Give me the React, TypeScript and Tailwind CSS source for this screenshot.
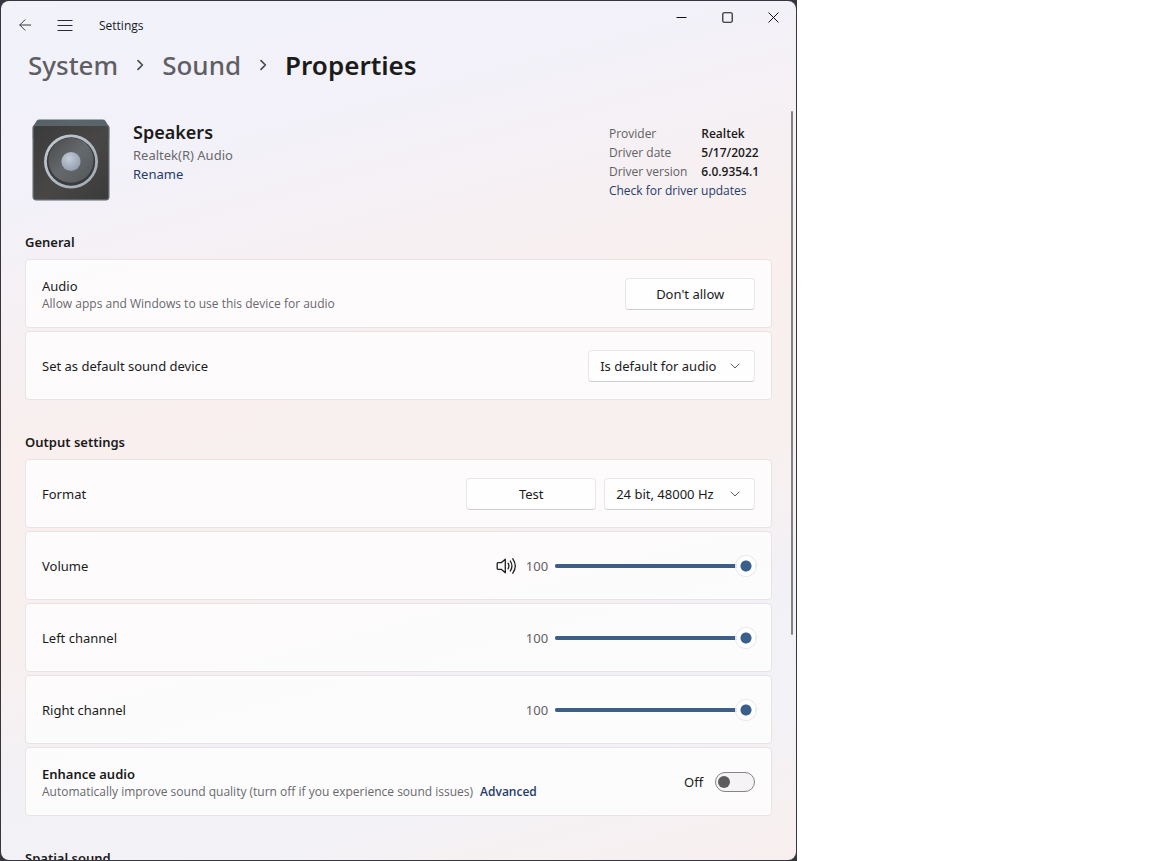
import { useState, type ReactNode } from "react";

function Chevron({ className }: { className: string }) {
  return (
    <svg viewBox="0 0 10 10" className={className} fill="none" stroke="currentColor" aria-hidden="true">
      <path d="M1 3 L5 7 L9 3" strokeLinecap="round" strokeLinejoin="round" />
    </svg>
  );
}

function CrumbArrow() {
  return (
    <svg viewBox="0 0 10 12" className="h-3 w-[10px] text-[#4c4c50]" fill="none" stroke="currentColor" strokeWidth="1.7" aria-hidden="true">
      <path d="M3 1.6 L7.4 6 L3 10.4" strokeLinecap="round" strokeLinejoin="round" />
    </svg>
  );
}

function SpeakerPicture() {
  return (
    <svg viewBox="0 0 78 82" className="h-[82px] w-[78px] shrink-0" role="img" aria-label="Speakers">
      <defs>
        <linearGradient id="face" x1="0" y1="0" x2="1" y2="1">
          <stop offset="0" stopColor="#3b3b3b" />
          <stop offset="0.55" stopColor="#484746" />
          <stop offset="1" stopColor="#3a3a3a" />
        </linearGradient>
        <linearGradient id="lid" x1="0" y1="0" x2="1" y2="0">
          <stop offset="0" stopColor="#546067" />
          <stop offset="0.5" stopColor="#59666b" />
          <stop offset="1" stopColor="#57646d" />
        </linearGradient>
        <linearGradient id="ring" x1="0" y1="0" x2="1" y2="1">
          <stop offset="0" stopColor="#c3cbd4" />
          <stop offset="1" stopColor="#a0a9b2" />
        </linearGradient>
        <linearGradient id="cone" x1="0" y1="0" x2="1" y2="1">
          <stop offset="0" stopColor="#48494a" />
          <stop offset="0.5" stopColor="#66696c" />
          <stop offset="1" stopColor="#54575a" />
        </linearGradient>
        <radialGradient id="cap" cx="0.4" cy="0.35" r="0.7">
          <stop offset="0" stopColor="#c5ced9" />
          <stop offset="1" stopColor="#8f9cab" />
        </radialGradient>
      </defs>
      <path d="M0.8 8 L4.5 2 Q5.5 0.6 7.5 0.6 H70.5 Q72.5 0.6 73.5 2 L77.2 8 V20 H0.8 Z" fill="url(#lid)" />
      <rect x="1.2" y="6.2" width="75.6" height="74.6" rx="3" fill="url(#face)" stroke="#5c6468" strokeWidth="1.4" />
      <circle cx="39" cy="42.5" r="27" fill="url(#ring)" />
      <circle cx="39" cy="42.5" r="24.2" fill="#393b3d" />
      <circle cx="39" cy="41.3" r="22.5" fill="url(#cone)" />
      <circle cx="39" cy="42.5" r="9.6" fill="url(#cap)" />
    </svg>
  );
}

function VolumeIcon() {
  return (
    <svg viewBox="0 0 22 18" className="h-[18px] w-[22px] text-[#1f1f1f]" fill="none" stroke="currentColor" strokeWidth="1.3" strokeLinecap="round" strokeLinejoin="round" aria-hidden="true">
      <path d="M9.3 2.2 L5.2 5.7 H2 Q1.2 5.7 1.2 6.5 V11.5 Q1.2 12.3 2 12.3 H5.2 L9.3 15.8 Z" />
      <path d="M12 6.2 Q13.8 9 12 11.8" />
      <path d="M14.3 4 Q17.6 9 14.3 14" />
      <path d="M16.8 1.8 Q21.8 9 16.8 16.2" />
    </svg>
  );
}

function Card({ children }: { children: ReactNode }) {
  return (
    <div className="flex min-h-[69px] items-center justify-between rounded border border-[#e9e3e5] bg-white/75 px-4">
      {children}
    </div>
  );
}

function Section({ title, children }: { title: string; children: ReactNode }) {
  return (
    <section>
      <h2 className="mb-[7px] text-[13px] leading-5 font-semibold">{title}</h2>
      <div className="flex flex-col gap-[3px]">{children}</div>
    </section>
  );
}

const buttonClass =
  "h-8 w-[130px] rounded border border-[#e8e6e8] border-b-[#cfcdcf] bg-[#fefefe] text-[13px] leading-5";

function Dropdown({ id, option, className }: { id: string; option: string; className: string }) {
  return (
    <div className={`relative ${className}`}>
      <select
        id={id}
        className="h-8 w-full appearance-none rounded border border-[#e8e6e8] border-b-[#cfcdcf] bg-[#fefefe] pr-8 pl-[11px] text-[13px] leading-5"
      >
        <option>{option}</option>
      </select>
      <Chevron className="pointer-events-none absolute top-[11px] right-[15px] h-[10px] w-[10px] text-[#5c5c5c]" />
    </div>
  );
}

function Slider({ label, icon }: { label: string; icon?: ReactNode }) {
  const [value, setValue] = useState(100);
  const id = label.toLowerCase().replace(" ", "-");
  return (
    <Card>
      <label htmlFor={id} className="text-[13px] leading-5">{label}</label>
      <div className="-mr-px flex items-center">
        {icon}
        <span className="mr-[7px] ml-2 text-[13px] leading-5 text-[#616163]">{value}</span>
        <span className="relative flex h-5 w-[201px] items-center">
          <span className="absolute inset-x-0 h-1 rounded-full bg-[#8b8a8c]" />
          <span className="absolute left-0 h-1 rounded-full bg-[#3b5f8b]" style={{ width: `${value}%` }} />
          <input
            id={id}
            type="range"
            min={0}
            max={100}
            value={value}
            onChange={(e) => setValue(Number(e.target.value))}
            className="relative m-0 h-5 w-full appearance-none bg-transparent [&::-webkit-slider-thumb]:h-5 [&::-webkit-slider-thumb]:w-5 [&::-webkit-slider-thumb]:appearance-none [&::-webkit-slider-thumb]:rounded-full [&::-webkit-slider-thumb]:bg-[radial-gradient(circle,#3b5f8b_5px,#ffffff_6px)] [&::-webkit-slider-thumb]:shadow-[0_0_0_1px_#e9e7ea]"
          />
        </span>
      </div>
    </Card>
  );
}

const smallText = "font-['Open_Sans','Noto_Sans',sans-serif] text-[12px]";

const driver = [
  ["Provider", "Realtek"],
  ["Driver date", "5/17/2022"],
  ["Driver version", "6.0.9354.1"],
];

export default function App() {
  const [enhance, setEnhance] = useState(false);
  return (
    <div className="min-h-screen bg-white font-['Noto_Sans','Open_Sans',sans-serif] text-[#1b1b1b]">
      <div className="h-screen w-[69.2%] bg-[#37353d] p-px">
        <div className="flex h-full flex-col overflow-hidden rounded-lg bg-[linear-gradient(165deg,#f1f2fb_0%,#f3f1f8_20%,#f8efee_42%,#f8f0ef_60%,#f2f1f6_75%,#f3f2f6_86%,#f8efee_100%)]">
          <header className="flex h-[42px] shrink-0 items-start justify-between">
            <div className="flex items-center pt-[13px] pl-[18px]">
              <button aria-label="Back" className="text-[#3c3c40]">
                <svg viewBox="0 0 12 12" className="h-3 w-3" fill="none" stroke="currentColor" strokeLinecap="round" strokeLinejoin="round">
                  <path d="M6 0.8 L0.8 6 L6 11.2 M0.8 6 H11.6" />
                </svg>
              </button>
              <button aria-label="Navigation" className="ml-[26px] text-[#2c2c30]">
                <svg viewBox="0 0 16 11" className="h-[11px] w-4" fill="none" stroke="currentColor">
                  <path d="M0.5 0.5 H15.5 M0.5 5.5 H15.5 M0.5 10.5 H15.5" />
                </svg>
              </button>
              <h1 className={`ml-[26px] pt-[2px] leading-5 ${smallText}`}>Settings</h1>
            </div>
            <div className="flex h-8">
              <button aria-label="Minimize" className="flex w-[46px] items-center justify-center">
                <svg viewBox="0 0 11 11" className="size-[11px]" fill="none" stroke="#111111">
                  <path d="M0.5 5.5 H10.5" />
                </svg>
              </button>
              <button aria-label="Maximize" className="flex w-[46px] items-center justify-center">
                <svg viewBox="0 0 11 11" className="size-[11px]" fill="none" stroke="#111111" strokeWidth="1.1">
                  <rect x="0.8" y="0.8" width="9.4" height="9.4" rx="1.2" />
                </svg>
              </button>
              <button aria-label="Close" className="flex w-[46px] items-center justify-center">
                <svg viewBox="0 0 11 11" className="size-[11px]" fill="none" stroke="#111111">
                  <path d="M0.5 0.5 L10.5 10.5 M10.5 0.5 L0.5 10.5" />
                </svg>
              </button>
            </div>
          </header>

          <nav aria-label="Breadcrumb" className="flex h-11 shrink-0 items-center gap-[17px] pl-[27px] text-[26px] leading-9 font-semibold">
            <a href="#system" className="font-medium text-[#5f5f63]">System</a>
            <CrumbArrow />
            <a href="#sound" className="font-medium text-[#5f5f63]">Sound</a>
            <CrumbArrow />
            <span aria-current="page">Properties</span>
          </nav>

          <div className="mt-6 flex min-h-0 flex-1 pr-[3px]">
            <main className="min-w-0 flex-1 overflow-hidden pr-[19px] pl-6">
              <div className="flex items-start pt-2 pb-[31px] pl-[7px]">
                <SpeakerPicture />
                <div className="ml-[23px] flex flex-col items-start text-[13px] leading-[19px]">
                  <h2 className="text-[18px] leading-[27px] font-semibold">Speakers</h2>
                  <p className="text-[#69696c]">Realtek(R) Audio</p>
                  <a href="#rename" className="text-[#263c69]">Rename</a>
                </div>
                <div className={`mt-[5px] mr-[13px] ml-auto leading-[19px] ${smallText}`}>
                  <dl className="grid grid-cols-[auto_auto] gap-x-[14px]">
                    {driver.map(([name, value]) => (
                      <div key={name} className="contents">
                        <dt className="text-[#616163]">{name}</dt>
                        <dd className="font-semibold">{value}</dd>
                      </div>
                    ))}
                  </dl>
                  <a href="#updates" className="block text-[#263c69]">Check for driver updates</a>
                </div>
              </div>

              <div className="flex flex-col gap-8">
                <Section title="General">
                  <Card>
                    <div className="pt-[2px]">
                      <h3 className="text-[13px] leading-[18px]">Audio</h3>
                      <p className={`leading-[18px] text-[#69696c] ${smallText}`}>Allow apps and Windows to use this device for audio</p>
                    </div>
                    <button className={buttonClass}>Don't allow</button>
                  </Card>
                  <Card>
                    <label htmlFor="default-device" className="text-[13px] leading-5">Set as default sound device</label>
                    <Dropdown id="default-device" option="Is default for audio" className="w-[167px]" />
                  </Card>
                </Section>

                <Section title="Output settings">
                  <Card>
                    <label htmlFor="format" className="text-[13px] leading-5">Format</label>
                    <div className="flex gap-2">
                      <button className={buttonClass}>Test</button>
                      <Dropdown id="format" option="24 bit, 48000 Hz" className="w-[151px]" />
                    </div>
                  </Card>
                  <Slider label="Volume" icon={<VolumeIcon />} />
                  <Slider label="Left channel" />
                  <Slider label="Right channel" />
                  <Card>
                    <div className="pt-[2px]">
                      <label htmlFor="enhance" className="block text-[13px] leading-[18px] font-semibold">Enhance audio</label>
                      <p className={`leading-[18px] text-[#69696c] ${smallText}`}>
                        Automatically improve sound quality (turn off if you experience sound issues)
                        <a href="#advanced" className="ml-[7px] font-semibold text-[#263c69]">Advanced</a>
                      </p>
                    </div>
                    <div className="flex items-center gap-3 text-[13px] leading-5">
                      <span>{enhance ? "On" : "Off"}</span>
                      <input
                        id="enhance"
                        type="checkbox"
                        role="switch"
                        checked={enhance}
                        onChange={(e) => setEnhance(e.target.checked)}
                        className="h-5 w-10 appearance-none rounded-full border border-[#858387] bg-[#f5f3f5] px-[2px] py-[3px] before:block before:size-3 before:rounded-full before:bg-[#5d5b5d] checked:bg-[#3b5f8b] checked:before:ml-5 checked:before:bg-white"
                      />
                    </div>
                  </Card>
                </Section>

                <Section title="Spatial sound">
                  <Card>
                    <span className="text-[13px] leading-5">Spatial sound</span>
                  </Card>
                </Section>
              </div>
            </main>
            <div aria-hidden="true" className="flex w-[2px] flex-col">
              <div className="h-[70%] rounded-full bg-[#858286]" />
            </div>
          </div>
        </div>
      </div>
    </div>
  );
}
